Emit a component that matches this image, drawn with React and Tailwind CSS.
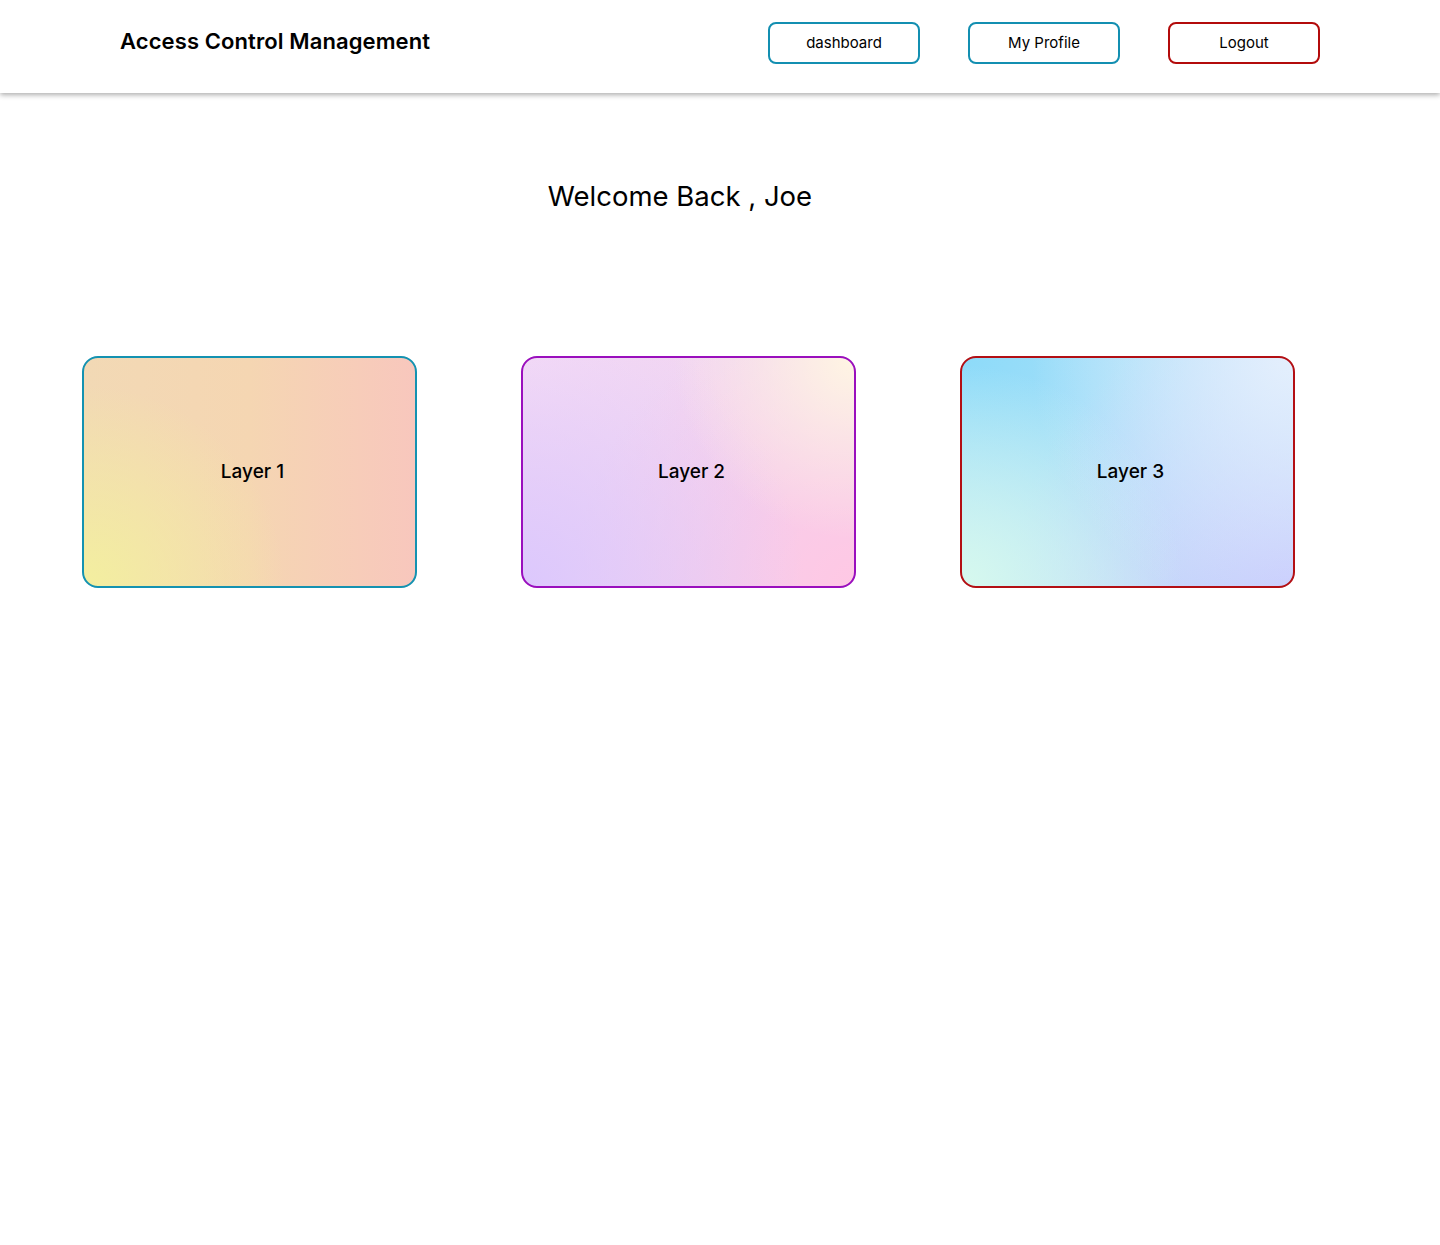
import React from 'react';

const navButtons = [
  { label: 'dashboard', tone: 'border-[#138fb1]' },
  { label: 'My Profile', tone: 'border-[#138fb1]' },
  { label: 'Logout', tone: 'border-[#b30b0b]' },
];

const Card = ({ title, className }) => (
  <div className={`w-[335px] h-[232px] rounded-2xl border-2 flex items-center justify-center pl-[6px] pt-[1px] ${className}`}>
    <span className="text-[19px] font-medium text-black">{title}</span>
  </div>
);

const App = () => {
  return (
    <div className="min-h-[1245px] bg-white font-['Inter',sans-serif] text-black">
      {/* header */}
      <header className="h-[93px] px-[120px] pt-[22px] flex items-start justify-between bg-white shadow-[0_2px_5px_rgba(0,0,0,0.32)]">
        <h1 className="text-[22px] leading-[38px] font-semibold tracking-[0.1px]">Access Control Management</h1>
        <nav className="flex gap-[48px]">
          {navButtons.map((b) => (
            <button
              key={b.label}
              className={`w-[152px] h-[42px] rounded-lg border-2 bg-white text-[15px] ${b.tone}`}
            >
              {b.label}
            </button>
          ))}
        </nav>
      </header>

      <main>
        <div className="flex justify-center pr-[80px] pt-[85px]">
          <h2 className="text-[27.5px] leading-[36px] font-normal">Welcome Back , Joe</h2>
        </div>

        <div className="flex gap-[104px] pl-[82px] pt-[142px]">
          <Card
            title="Layer 1"
            className="border-[#1492b1] bg-[#f5d6b4] bg-[radial-gradient(circle_at_0%_100%,#f3ef9f_0%,transparent_50%),linear-gradient(to_right,#f2d9b5_0%,#f5d6b2_50%,#f8c7bd_100%)]"
          />
          <Card
            title="Layer 2"
            className="border-[#9a0fbd] bg-[#efd2f0] bg-[radial-gradient(circle_at_100%_0%,#fff5e3_0%,transparent_45%),radial-gradient(circle_at_0%_100%,#dcc8fd_0%,transparent_70%),radial-gradient(circle_at_100%_100%,#ffc8e4_0%,transparent_70%),radial-gradient(circle_at_0%_0%,#f6dcf5_0%,transparent_70%)]"
          />
          <Card
            title="Layer 3"
            className="border-[#b30f14] bg-[#c2e3f8] bg-[radial-gradient(circle_at_100%_0%,#e4effd_0%,transparent_65%),radial-gradient(circle_at_0%_100%,#d6f9ee_0%,transparent_55%),radial-gradient(circle_at_100%_100%,#c8cbfd_0%,transparent_70%),radial-gradient(ellipse_at_0%_0%,#8ddbf9_0%,transparent_80%)]"
          />
        </div>
      </main>
    </div>
  );
};

export default App;
